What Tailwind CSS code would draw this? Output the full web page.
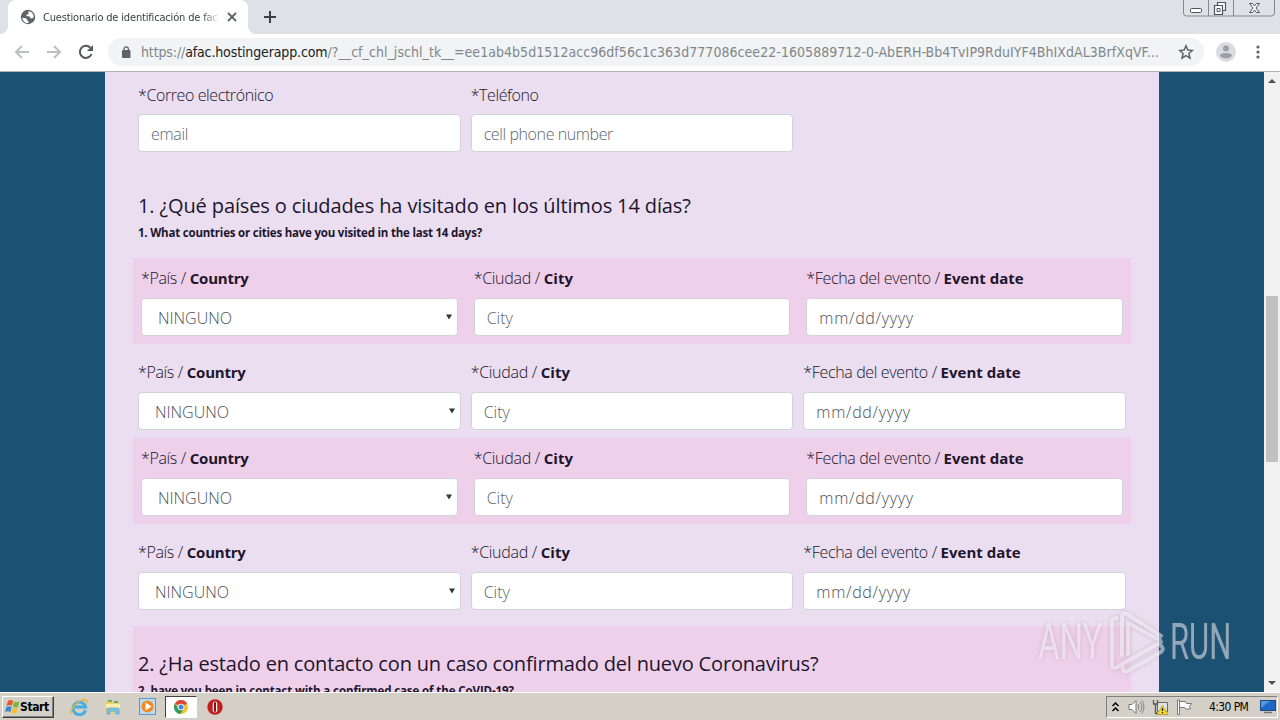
<!DOCTYPE html>
<html lang="es">
<head>
  <meta charset="UTF-8" />
  <meta name="viewport" content="width=device-width, initial-scale=1.0"/>
  <title>Cuestionario de identificación de factores</title>
  <script src="https://cdn.jsdelivr.net/npm/@tailwindcss/browser@4"></script>
</head>
<body class="w-[1280px] h-[720px] overflow-hidden relative flex flex-col bg-white font-['Open_Sans','Noto_Sans',sans-serif] text-[#21152d]">

  <!-- Tab strip -->
  <header class="h-[34px] shrink-0 bg-[#dee1e6] flex items-start justify-between">
    <div class="flex h-full items-end">
      <div class="w-2 h-2 bg-white"><div class="size-2 rounded-br-lg bg-[#dee1e6]"></div></div>
      <div class="w-[240px] h-full bg-white rounded-t-lg flex items-center pl-3 pr-2">
        <svg class="size-4 shrink-0" viewBox="0 0 16 16"><circle cx="8" cy="8" r="7.2" fill="#5f6368"/><path d="M2.3 8.4C3 9.4 5 8.6 6.3 9.4c1.200.8.5 2 1.600 2.500 1.300.5.7 1.500.2 2.100C5 14 2.300 11.800 2.300 8.400zM8.300 2.200c-.5 1.200 1 1.200.4 2.300-.6 1-2.200.7-2.400 2 .5 1.200 2.200.2 3.200 1 .8.8.6 1.800 1.800 2 1.300.1 1.700-.8 2.500-1.200C14 5 11.500 2.200 8.300 2.200z" fill="#fff"/></svg>
        <div class="ml-[7px] w-[177px] whitespace-nowrap text-[11px] leading-4 pt-px tracking-[-0.17px] text-[#3c4043] font-['DejaVu_Sans_Condensed','DejaVu_Sans',sans-serif] [font-stretch:condensed] mask-r-from-90%">Cuestionario de identificación de fac</div>
        <svg class="w-4 h-4 ml-auto shrink-0" viewBox="0 0 16 16"><path d="M4 4l8 8M12 4l-8 8" stroke="#5f6368" stroke-width="1.8"/></svg>
      </div>
      <div class="w-2 h-2 bg-white"><div class="size-2 rounded-bl-lg bg-[#dee1e6]"></div></div>
      <svg class="w-4 h-[34px] ml-[6px]" viewBox="0 0 16 34"><path d="M8 11v12M2 17h12" stroke="#3c4043" stroke-width="2"/></svg>
    </div>
    <svg class="w-[94px] h-[17px] mr-[4px]" viewBox="0 0 94 17">
      <path d="M1.500 0v13q0 3 3 3h85q3 0 3-3V0M26.500 0v16M51.500 0v16" fill="none" stroke="#85888f"/>
      <rect x="8.500" y="8.500" width="11" height="4" rx="1" fill="#fff" stroke="#50545f"/>
      <path d="M35.500 2.500h8v8h-8z" fill="#fff" stroke="#50545f" stroke-width="1.200"/>
      <path d="M32.500 5.500h8v9h-8z" fill="#fff" stroke="#50545f" stroke-width="1.200"/>
      <path d="M35 8.500h3v3h-3z" fill="none" stroke="#50545f"/>
      <path d="M67.500 3.500h3l2 2.500 2-2.500h3L74 8l3.500 4.500h-3l-2-2.500-2 2.500h-3L71 8z" fill="#fff" stroke="#50545f"/>
    </svg>
  </header>

  <!-- Toolbar -->
  <div class="h-[38px] shrink-0 bg-white border-b border-[#b3b0b8] flex items-center pl-[14px]">
    <svg class="size-4 mb-px" viewBox="0 0 16 16"><path d="M15 8H2M8 2L2 8l6 6" fill="none" stroke="#bcbec1" stroke-width="2"/></svg>
    <svg class="size-4 ml-4 mb-px" viewBox="0 0 16 16"><path d="M1 8h13M8 2l6 6-6 6" fill="none" stroke="#bcbec1" stroke-width="2"/></svg>
    <svg class="size-4 ml-4 mb-px" viewBox="0 0 16 16"><path d="M13.500 10A6 6 0 1 1 12.300 3.800" fill="none" stroke="#54575c" stroke-width="2"/><path d="M15 1v6H9z" fill="#54575c"/></svg>
    <div class="w-[1096px] h-7 ml-[14px] mb-px rounded-full bg-[#f1f3f4] flex items-center pl-[13px] pr-[10px]">
      <svg class="w-[10px] h-3 shrink-0" viewBox="0 0 10 12"><rect x="1" y="4" width="8.500" height="8" rx="1" fill="#5f6368"/><path d="M3 5V3a2.200 2.200 0 0 1 4.400 0v2" fill="none" stroke="#5f6368" stroke-width="1.300"/></svg>
      <div class="ml-[10px] whitespace-nowrap text-[14px] leading-5 text-[#80868b] font-['DejaVu_Sans_Condensed','DejaVu_Sans',sans-serif] [font-stretch:condensed] tracking-[0.05px]"><span class="tracking-[-0.13px]">https://<span class="text-[#202124]">afac.hostingerapp.com</span></span>/?__cf_chl_jschl_tk__=ee1ab4b5d1512acc96df56c1c363d777086cee22-1605889712-0-AbERH-Bb4TvIP9RduIYF4BhIXdAL3BrfXqVF...</div>
      <svg class="size-4 ml-auto shrink-0" viewBox="0 0 16 16"><path d="M8 1.800l1.800 4.300 4.600.4-3.500 3 1.100 4.600L8 11.700l-4 2.400 1.100-4.600-3.500-3 4.600-.4z" fill="none" stroke="#5f6368" stroke-width="1.500"/></svg>
    </div>
    <svg class="size-5 ml-[12px] mb-px" viewBox="0 0 20 20"><circle cx="10" cy="10" r="10" fill="#dadce0"/><circle cx="10" cy="6.500" r="3" fill="#9aa0a6"/><path d="M4 13.500c0-3.500 12-3.500 12 0-1.500 4-10.500 4-12 0z" fill="#9aa0a6"/></svg>
    <svg class="w-4 h-4 ml-[14px] mb-px" viewBox="0 0 16 16" fill="#5f6368"><circle cx="8" cy="3" r="1.600"/><circle cx="8" cy="8" r="1.600"/><circle cx="8" cy="13" r="1.600"/></svg>
  </div>

  <!-- Page -->
  <div class="h-[620px] shrink-0 flex overflow-hidden bg-[#1b5273]">
    <main class="w-[1054px] ml-[105px] h-full overflow-hidden bg-[#eadef0] pl-7 pr-7 pt-[10px]">
      <div class="flex text-[16px] leading-6">
        <div class="w-1/3 px-[5px]">
          <label class="block pt-px mb-[7px] tracking-[-0.4px] font-light">*Correo electrónico</label>
          <input type="text" placeholder="email" class="block w-full h-[38px] px-3 pt-[2px] rounded border border-[#ced4da] bg-white font-light tracking-[-0.3px] placeholder:text-[#5c656d]"/>
        </div>
        <div class="w-1/3 px-[5px]">
          <label class="block pt-px mb-[7px] tracking-[-0.4px] font-light">*Teléfono</label>
          <input type="text" placeholder="cell phone number" class="block w-full h-[38px] px-3 pt-[2px] rounded border border-[#ced4da] bg-white font-light tracking-[-0.4px] placeholder:text-[#5c656d]"/>
        </div>
      </div>

      <div class="mt-[42px] h-16 px-[5px]">
        <h5 class="text-[20px] leading-6 tracking-[-0.12px] whitespace-nowrap">1. ¿Qué países o ciudades ha visitado en los últimos 14 días?</h5>
        <p class="mt-[6px] text-[11.5px] leading-[18px] font-bold tracking-[-0.21px] whitespace-nowrap">1. What countries or cities have you visited in the last 14 days?</p>
      </div>

      <div class="flex py-2 bg-[#efd0ea] text-[16px] leading-6">
        <div class="w-1/3 px-2">
          <label class="block mb-2 font-light tracking-[-0.35px]">*País / <b class="font-bold text-[15px] tracking-[-0.2px]">Country</b></label>
          <div class="h-[38px] pl-4 pr-[5px] rounded border border-[#ced4da] bg-white text-[#495057] font-light flex items-center justify-between"><span class="pt-[2px]">NINGUNO</span> <svg class="w-[6px] h-[6px]" viewBox="0 0 7 6"><path d="M0 0h7L3.500 6z" fill="#33373b"/></svg></div>
        </div>
        <div class="w-1/3 px-2">
          <label class="block mb-2 font-light tracking-[-0.3px]">*Ciudad / <b class="font-bold text-[15px] tracking-normal">City</b></label>
          <input type="text" placeholder="City" class="block w-full h-[38px] px-3 pt-[2px] rounded border border-[#ced4da] bg-white font-light placeholder:text-[#5c656d]"/>
        </div>
        <div class="w-1/3 px-2">
          <label class="block mb-2 font-light tracking-[-0.35px]">*Fecha del evento / <b class="font-bold text-[15px] tracking-normal">Event date</b></label>
          <input type="text" placeholder="mm/dd/yyyy" class="block w-full h-[38px] px-3 pt-[2px] rounded border border-[#ced4da] bg-white font-light tracking-[0.7px] placeholder:text-[#495057]"/>
        </div>
      </div>

      <div class="flex pt-4 pb-2 text-[16px] leading-6">
        <div class="w-1/3 px-[5px]">
          <label class="block mb-2 font-light tracking-[-0.35px]">*País / <b class="font-bold text-[15px] tracking-[-0.2px]">Country</b></label>
          <div class="h-[38px] pl-4 pr-[5px] rounded border border-[#ced4da] bg-white text-[#495057] font-light flex items-center justify-between"><span class="pt-[2px]">NINGUNO</span> <svg class="w-[6px] h-[6px]" viewBox="0 0 7 6"><path d="M0 0h7L3.500 6z" fill="#33373b"/></svg></div>
        </div>
        <div class="w-1/3 px-[5px]">
          <label class="block mb-2 font-light tracking-[-0.3px]">*Ciudad / <b class="font-bold text-[15px] tracking-normal">City</b></label>
          <input type="text" placeholder="City" class="block w-full h-[38px] px-3 pt-[2px] rounded border border-[#ced4da] bg-white font-light placeholder:text-[#5c656d]"/>
        </div>
        <div class="w-1/3 px-[5px]">
          <label class="block mb-2 font-light tracking-[-0.35px]">*Fecha del evento / <b class="font-bold text-[15px] tracking-normal">Event date</b></label>
          <input type="text" placeholder="mm/dd/yyyy" class="block w-full h-[38px] px-3 pt-[2px] rounded border border-[#ced4da] bg-white font-light tracking-[0.7px] placeholder:text-[#495057]"/>
        </div>
      </div>

      <div class="flex py-2 bg-[#efd0ea] text-[16px] leading-6">
        <div class="w-1/3 px-2">
          <label class="block mb-2 font-light tracking-[-0.35px]">*País / <b class="font-bold text-[15px] tracking-[-0.2px]">Country</b></label>
          <div class="h-[38px] pl-4 pr-[5px] rounded border border-[#ced4da] bg-white text-[#495057] font-light flex items-center justify-between"><span class="pt-[2px]">NINGUNO</span> <svg class="w-[6px] h-[6px]" viewBox="0 0 7 6"><path d="M0 0h7L3.500 6z" fill="#33373b"/></svg></div>
        </div>
        <div class="w-1/3 px-2">
          <label class="block mb-2 font-light tracking-[-0.3px]">*Ciudad / <b class="font-bold text-[15px] tracking-normal">City</b></label>
          <input type="text" placeholder="City" class="block w-full h-[38px] px-3 pt-[2px] rounded border border-[#ced4da] bg-white font-light placeholder:text-[#5c656d]"/>
        </div>
        <div class="w-1/3 px-2">
          <label class="block mb-2 font-light tracking-[-0.35px]">*Fecha del evento / <b class="font-bold text-[15px] tracking-normal">Event date</b></label>
          <input type="text" placeholder="mm/dd/yyyy" class="block w-full h-[38px] px-3 pt-[2px] rounded border border-[#ced4da] bg-white font-light tracking-[0.7px] placeholder:text-[#495057]"/>
        </div>
      </div>

      <div class="flex py-4 text-[16px] leading-6">
        <div class="w-1/3 px-[5px]">
          <label class="block mb-2 font-light tracking-[-0.35px]">*País / <b class="font-bold text-[15px] tracking-[-0.2px]">Country</b></label>
          <div class="h-[38px] pl-4 pr-[5px] rounded border border-[#ced4da] bg-white text-[#495057] font-light flex items-center justify-between"><span class="pt-[2px]">NINGUNO</span> <svg class="w-[6px] h-[6px]" viewBox="0 0 7 6"><path d="M0 0h7L3.500 6z" fill="#33373b"/></svg></div>
        </div>
        <div class="w-1/3 px-[5px]">
          <label class="block mb-2 font-light tracking-[-0.3px]">*Ciudad / <b class="font-bold text-[15px] tracking-normal">City</b></label>
          <input type="text" placeholder="City" class="block w-full h-[38px] px-3 pt-[2px] rounded border border-[#ced4da] bg-white font-light placeholder:text-[#5c656d]"/>
        </div>
        <div class="w-1/3 px-[5px]">
          <label class="block mb-2 font-light tracking-[-0.35px]">*Fecha del evento / <b class="font-bold text-[15px] tracking-normal">Event date</b></label>
          <input type="text" placeholder="mm/dd/yyyy" class="block w-full h-[38px] px-3 pt-[2px] rounded border border-[#ced4da] bg-white font-light tracking-[0.7px] placeholder:text-[#495057]"/>
        </div>
      </div>

      <div class="h-24 px-[5px] pt-[26px] bg-[#efd0ea]">
        <h5 class="text-[20px] leading-6 tracking-[-0.17px] whitespace-nowrap">2. ¿Ha estado en contacto con un caso confirmado del nuevo Coronavirus?</h5>
        <p class="mt-[6px] text-[11.5px] leading-[18px] font-bold tracking-[-0.1px] whitespace-nowrap">2. have you been in contact with a confirmed case of the CoVID-19?</p>
      </div>
    </main>

    <!-- Scrollbar -->
    <div class="w-4 h-full ml-auto bg-[#f1f1f1] flex flex-col items-center">
      <svg class="w-4 h-4" viewBox="0 0 16 16"><path d="M4 11l4-4 4 4z" fill="#505050"/></svg>
      <div class="w-3 h-[166px] mt-[208px] bg-[#c1c1c1]"></div>
      <svg class="w-4 h-4 mt-auto" viewBox="0 0 16 16"><path d="M4 5h8l-4 4z" fill="#505050"/></svg>
    </div>
  </div>

  <!-- Taskbar -->
  <footer class="h-7 shrink-0 bg-[#d4d0c8] border-t border-white flex items-center font-['DejaVu_Sans_Condensed','DejaVu_Sans',sans-serif] [font-stretch:condensed] text-black">
    <div class="w-[52px] h-[22px] ml-[2px] border border-t-white border-l-white border-b-[#404040] border-r-[#404040] shadow-[inset_-1px_-1px_#808080] flex items-center pl-[2px]">
      <svg class="w-[15px] h-4 shrink-0" viewBox="0 0 15 16"><path d="M3 2q3-2 5 0L7 7Q5 5 1.500 7z" fill="#e8562a"/><path d="M9 2.500q2 1.500 5.500 0L13 8q-3 1-5 0z" fill="#7ab83c"/><path d="M1.300 8Q4 6.500 6.700 8L5.500 13Q3 11.500 0 13z" fill="#3d87cf"/><path d="M7.700 9q2 1.300 5 0l-1.400 5q-3 1-5-.5z" fill="#f6bd2c"/></svg>
      <span class="text-[12px] leading-4 font-bold tracking-[-0.4px]">Start</span>
    </div>
    <svg class="w-[18px] h-[18px] ml-4" viewBox="0 0 18 18"><path d="M15.500 12.200A6.300 6.300 0 1 1 15.600 9H5" fill="none" stroke="#45aee8" stroke-width="3"/><path d="M1 16C-1 12 8 2 15 1.500c3 .2 2 2.500 1 4" fill="none" stroke="#e9b63c" stroke-width="1.300"/></svg>
    <svg class="w-[18px] h-[18px] ml-4" viewBox="0 0 18 18"><path d="M2 3h5l1 2h8v10H2z" fill="#efcf69"/><path d="M4 2h4v2H4zM10 3h4v2h-4z" fill="#6fae58"/><path d="M2 6h14v4H2z" fill="#faecab"/><path d="M3 16v-4q0-2 2-2h8q2 0 2 2v4h-3v-3H6v3z" fill="#7fc5e8" stroke="#4e9dc8" stroke-width=".7"/></svg>
    <svg class="w-[17px] h-[17px] ml-[17px]" viewBox="0 0 17 17"><rect x=".5" y=".5" width="16" height="16" fill="#b9dcf4" stroke="#6396be"/><circle cx="8.500" cy="8.500" r="6" fill="#f28b1d"/><path d="M6.500 4.500v8l6-4z" fill="#fff"/></svg>
    <div class="w-[32px] h-[22px] ml-[9px] bg-white border border-t-[#404040] border-l-[#404040] border-b-white border-r-white flex items-center justify-center">
      <svg class="w-[14px] h-[14px]" viewBox="0 0 14 14"><circle cx="7" cy="7" r="7" fill="#f4c430"/><path d="M7 7L.9 3.500A7 7 0 0 1 13.100 3.500z" fill="#dc4437"/><path d="M.9 3.500A7 7 0 0 0 6.500 14L9.600 8.500 7 7 3.900 8z" fill="#2f9e58"/><circle cx="7" cy="7" r="3.300" fill="#fff"/><circle cx="7" cy="7" r="2.500" fill="#4285e8"/></svg>
    </div>
    <svg class="w-4 h-4 ml-[10px]" viewBox="0 0 16 16"><circle cx="8" cy="8" r="7.700" fill="#c21c1c"/><rect x="5.700" y="2.500" width="4.600" height="11" rx="2.300" fill="#f8eded"/><rect x="7" y="3" width="2" height="10" rx="1" fill="#8c1010"/></svg>

    <div class="w-[172px] h-[22px] ml-auto mr-[2px] border border-t-[#808080] border-l-[#808080] border-b-white border-r-white flex items-center">
      <svg class="w-[7px] h-[10px] ml-[5px]" viewBox="0 0 7 10"><path d="M.5 4l3-3 3 3M.5 9l3-3 3 3" fill="none" stroke="#000" stroke-width="1.500"/></svg>
      <svg class="w-[17px] h-4 ml-[9px]" viewBox="0 0 17 16"><path d="M1 5.500h3l4-4v13l-4-4H1z" fill="#fff" stroke="#777"/><path d="M10 5q2 3 0 6M12 3q4 5 0 10M14 1.500q4 6.500 0 13" fill="none" stroke="#858585"/></svg>
      <svg class="w-[17px] h-4 ml-[7px]" viewBox="0 0 17 16"><path d="M5.500 3.500h10v9h-10z" fill="#dde5ec" stroke="#666"/><path d="M1.500 1v4h4V1M3.500 5v10M3.500 14.500h5" fill="none" stroke="#555" stroke-width="1.300"/><path d="M10.500 6l5.500 9.500H5z" fill="#f8d820" stroke="#a98d10" stroke-width=".6"/><path d="M10.500 9v3M10.500 13v1.300" stroke="#222" stroke-width="1.300"/></svg>
      <svg class="w-[17px] h-4 ml-[7px]" viewBox="0 0 17 16"><path d="M1.500 1v14.500h2V1zM3.500 2.500h6l1 2h5l-2 3 1 2.500h-5l-1-1.500h-5z" fill="#fff" stroke="#777"/></svg>
      <span class="ml-[16px] text-[12px] leading-4 tracking-[-0.6px] whitespace-nowrap">4:30 PM</span>
      <svg class="w-4 h-[14px] ml-auto mr-[1px]" viewBox="0 0 16 14"><rect x=".5" y=".5" width="15" height="10" fill="#1f67c4" stroke="#214a80"/><path d="M1 1h9L1 8z" fill="#4f97e4"/><path d="M4 12.500h8" stroke="#777" stroke-width="1.500"/></svg>
    </div>
  </footer>

  <!-- Watermark over the page -->
  <div class="absolute left-[1038px] top-[609px] w-[196px] h-[66px] flex items-center justify-between text-white/50 drop-shadow-[0_0_2px_rgba(90,70,110,0.45)]">
    <div class="w-[66px] h-[50px]"><span class="block origin-top-left scale-x-[0.66] text-[50px] leading-[50px] font-['Roboto',sans-serif]">ANY</span></div>
    <svg class="w-[60px] h-[66px]" viewBox="0 0 60 66" fill="none" stroke="currentColor" stroke-width="4" stroke-linejoin="round" stroke-linecap="round"><path d="M10 9Q5 9 5 13V56q0 4 5 2L54 33M54 27L20 5q-5-2-5 3V46M21 45V14L53 31M53 36Q58 39 54 43L21 62q-6 2-5-3"/></svg>
    <div class="w-[64px] h-[50px]"><span class="block origin-top-left scale-x-[0.62] text-[50px] leading-[50px] font-['Roboto',sans-serif]">RUN</span></div>
  </div>
</body>
</html>
